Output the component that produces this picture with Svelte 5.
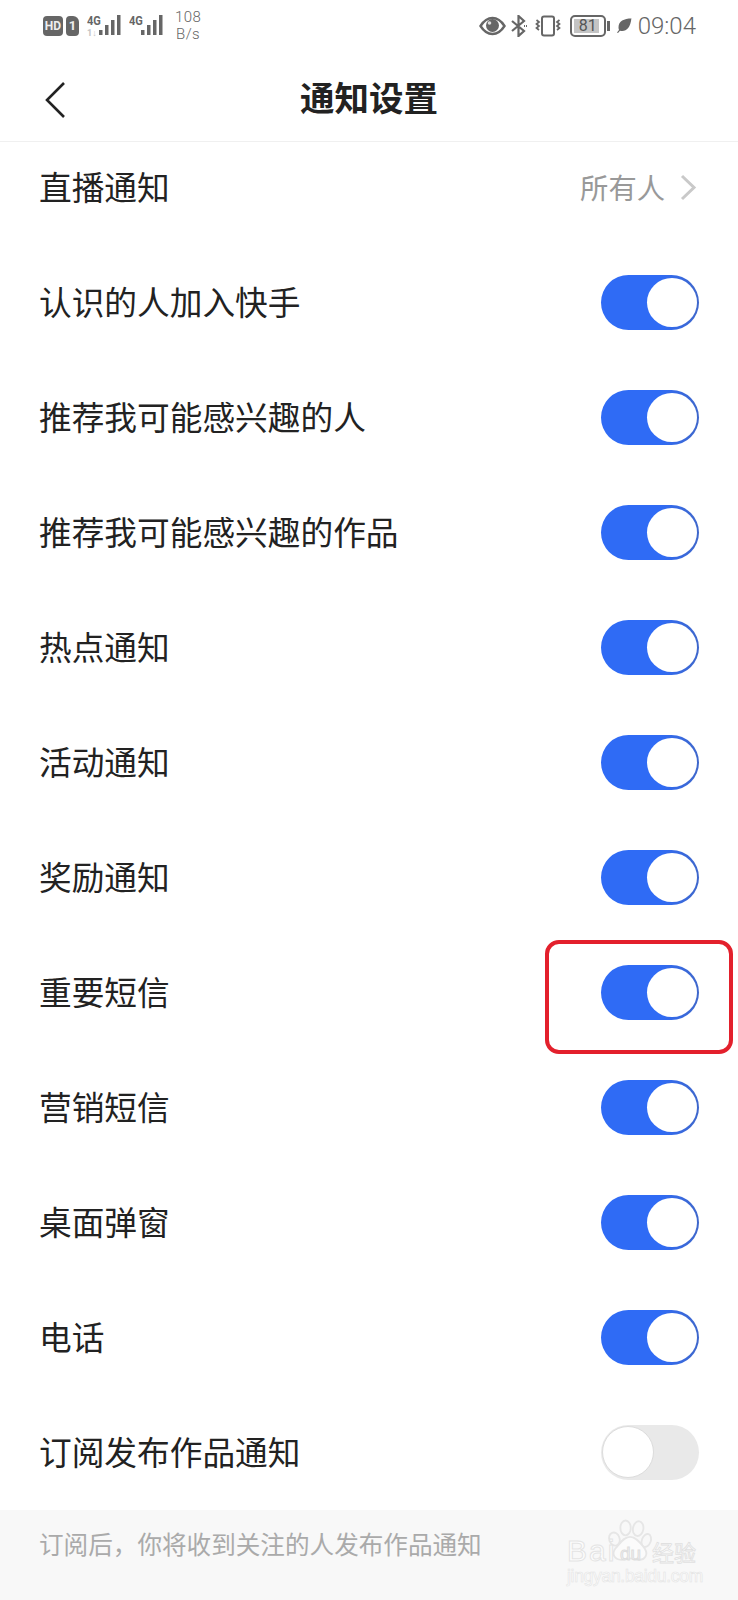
<script>
  const rows = [
    ['认识的人加入快手', true],
    ['推荐我可能感兴趣的人', true],
    ['推荐我可能感兴趣的作品', true],
    ['热点通知', true],
    ['活动通知', true],
    ['奖励通知', true],
    ['重要短信', true],
    ['营销短信', true],
    ['桌面弹窗', true],
    ['电话', true],
    ['订阅发布作品通知', false]
  ];
</script>

<div class="page">
  <div class="status">
    <div class="left">
      <span class="hd">HD</span>
      <span class="one">1</span>
      <div class="sig">
        <span class="g4">4G</span>
        <span class="tiny">1↓</span>
        <svg width="22" height="21" viewBox="0 0 22 21"><g fill="#666"><rect x="0" y="15" width="3.500" height="5"/><rect x="6" y="10" width="3.500" height="10"/><rect x="12" y="5" width="3.500" height="15"/><rect x="18" y="0" width="3.500" height="20"/></g></svg>
      </div>
      <div class="sig">
        <span class="g4">4G</span>
        <svg width="22" height="21" viewBox="0 0 22 21"><g fill="#666"><rect x="0" y="15" width="3.500" height="5"/><rect x="6" y="10" width="3.500" height="10"/><rect x="12" y="5" width="3.500" height="15"/><rect x="18" y="0" width="3.500" height="20"/></g></svg>
      </div>
      <div class="speed"><span>108</span><span>B/s</span></div>
    </div>
    <div class="right">
      <svg class="eye" width="27" height="20" viewBox="0 0 27 20"><path d="M1.500 10C5 4.500 9 2 13.500 2S22 4.500 25.500 10C22 15.500 18 18 13.500 18S5 15.500 1.500 10Z" fill="none" stroke="#666" stroke-width="2.400"/><circle cx="13.500" cy="9.500" r="6.500" fill="#666"/><circle cx="10.500" cy="7" r="1.800" fill="#ddd"/></svg>
      <svg class="bt" width="18" height="22" viewBox="0 0 18 22"><path d="M2 6l12 10-5.500 5V1L14 6 2 16" fill="none" stroke="#666" stroke-width="2.200"/><path d="M14 11h3.500" stroke="#666" stroke-width="2" stroke-dasharray="1 1"/></svg>
      <svg class="vib" width="26" height="22" viewBox="0 0 26 22"><rect x="7" y="1.500" width="12" height="19" rx="2" fill="none" stroke="#666" stroke-width="2"/><path d="M1.500 5l2.500 2-2.500 2 2.500 2-2.500 2 2.500 2M24.500 5l-2.500 2 2.500 2-2.500 2 2.500 2-2.500 2" fill="none" stroke="#666" stroke-width="1.700"/></svg>
      <div class="battery"><span class="level"></span><span class="pct">81</span></div>
      <span class="cap"></span>
      <svg class="leaf" width="15" height="15" viewBox="0 0 15 15"><path d="M14.500 .5C7 .5 1.500 3 1.500 9.500c0 1 .2 1.800.5 2.500L0 14.500l1 .5 2-2.300c5.500 1.500 10.500-2 11.500-13.200Z" fill="#666"/></svg>
      <span class="time">09:04</span>
    </div>
  </div>

  <header class="nav">
    <svg class="back" width="22" height="38" viewBox="0 0 22 38"><path d="M20 2 3 19l17 17" fill="none" stroke="#222" stroke-width="2.600"/></svg>
    <h1>通知设置</h1>
  </header>

  <div class="row first">
    <span class="label">直播通知</span>
    <div class="value">
      <span>所有人</span>
      <svg width="17" height="27" viewBox="0 0 17 27"><path d="M2 2l12 11.500L2 25" fill="none" stroke="#c9c9c9" stroke-width="3"/></svg>
    </div>
  </div>

  {#each rows as [label, on]}
    <div class="row">
      <span class="label">{label}</span>
      <span class="toggle" class:on><span class="knob"></span></span>
    </div>
  {/each}

  <footer class="foot">订阅后，你将收到关注的人发布作品通知</footer>

  <div class="redbox"></div>

  <div class="mark">
    <svg class="paw" width="46" height="46" viewBox="0 0 62 62"><g fill="none" stroke="#e6e6e6" stroke-width="2.500"><ellipse cx="10" cy="27" rx="7" ry="9" transform="rotate(-20 10 27)"/><ellipse cx="25" cy="12" rx="7" ry="10"/><ellipse cx="42" cy="13" rx="7" ry="10" transform="rotate(10 42 13)"/><ellipse cx="53" cy="29" rx="6" ry="9" transform="rotate(20 53 29)"/><path d="M31 24c9 0 15 10 20 16 5 8 0 16-9 15-5-1-8-2-11-2s-7 2-12 2c-9 0-13-8-8-15 6-6 11-16 20-16Z" fill="#fbfbfb"/></g></svg>
    <span class="bai">Bai</span>
    <span class="du">du</span>
    <span class="jy">经验</span>
    <span class="url">jingyan.baidu.com</span>
  </div>
</div>

<style>
  :global(body) {
    margin: 0;
    background: #fff;
  }
  .page {
    position: relative;
    width: 738px;
    height: 1600px;
    overflow: hidden;
    background: #fff;
    color: #222;
    font-family: "Noto Sans CJK SC", "Noto Sans", sans-serif;
  }
  .status {
    height: 54px;
    display: flex;
    justify-content: space-between;
    align-items: flex-start;
    padding: 9px 42px 0 43px;
    box-sizing: border-box;
    color: #666;
    font-family: Roboto, sans-serif;
  }
  .left, .right {
    display: flex;
    align-items: center;
    height: 33px;
  }
  .hd {
    width: 20px;
    height: 20px;
    margin-top: 1px;
    background: #666;
    color: #eee;
    border-radius: 4px;
    font-size: 12px;
    font-weight: 700;
    line-height: 20px;
    text-align: center;
  }
  .one {
    width: 13px;
    height: 20px;
    margin: 1px 0 0 3px;
    background: #666;
    color: #eee;
    border-radius: 4px 6px 4px 4px;
    font-size: 13px;
    font-weight: 700;
    line-height: 20px;
    text-align: center;
  }
  .sig {
    position: relative;
    width: 34px;
    height: 28px;
    margin-left: 8px;
  }
  .sig svg {
    position: absolute;
    right: 0;
    top: 3px;
  }
  .g4 {
    position: absolute;
    left: 0;
    top: 2px;
    font-size: 13px;
    font-weight: 700;
    line-height: 13px;
    letter-spacing: -.2px;
    transform: scaleX(.85);
    transform-origin: left;
  }
  .tiny {
    position: absolute;
    left: 0;
    top: 16px;
    font-size: 9px;
    line-height: 10px;
    color: #c4c4c4;
    font-weight: 700;
  }
  .speed {
    display: flex;
    flex-direction: column;
    align-items: center;
    margin: 0 0 0 12px;
    font-size: 15px;
    line-height: 17px;
    font-weight: 300;
    letter-spacing: .4px;
  }
  .eye { margin-right: 4px; }
  .bt { margin-right: 7px; }
  .vib { margin-right: 9px; }
  .battery {
    position: relative;
    width: 36px;
    height: 22px;
    box-sizing: border-box;
    border: 2px solid #666;
    border-radius: 5px;
    display: flex;
    align-items: center;
    justify-content: center;
  }
  .level {
    position: absolute;
    left: 2px;
    top: 2px;
    bottom: 2px;
    width: 25px;
    background: #c4c4c4;
  }
  .pct {
    position: relative;
    font-size: 16px;
    font-weight: 400;
    line-height: 18px;
    color: #555;
  }
  .cap {
    width: 2.500px;
    height: 10px;
    margin: 0 7px 0 1.500px;
    background: #666;
  }
  .leaf { margin-right: 6px; }
  .time {
    font-size: 24px;
    font-weight: 300;
    line-height: 28px;
    color: #666;
  }
  .nav {
    position: relative;
    height: 88px;
    box-sizing: border-box;
    border-bottom: 1px solid #f0f0f0;
    display: flex;
    align-items: center;
    justify-content: center;
  }
  .back {
    position: absolute;
    left: 44px;
    top: 27px;
  }
  h1 {
    margin: 0 0 4px;
    font-size: 34.500px;
    font-weight: 700;
    line-height: 48px;
    color: #222;
  }
  .row {
    height: 115px;
    box-sizing: border-box;
    padding: 0 39px;
    display: flex;
    align-items: center;
    justify-content: space-between;
  }
  .first {
    height: 103px;
    padding-bottom: 11px;
    padding-right: 41px;
  }
  .label {
    padding-bottom: 4px;
    font-size: 32.700px;
    line-height: 44px;
    color: #222;
  }
  .value {
    display: flex;
    align-items: center;
    gap: 15px;
    padding-bottom: 2px;
    font-size: 28.300px;
    line-height: 40px;
    color: #999;
  }
  .toggle {
    width: 98px;
    height: 55px;
    box-sizing: border-box;
    padding: 3px 2px;
    border-radius: 28px;
    background: #e9e9e9;
    display: flex;
  }
  .toggle.on {
    background: linear-gradient(90deg, #2f6bf5 60%, #3f67cb);
    justify-content: flex-end;
  }
  .toggle:not(.on) {
    padding: 2px 1px;
  }
  .knob {
    width: 50px;
    height: 49px;
    box-sizing: border-box;
    border-radius: 50%;
    background: #fff;
  }
  .toggle:not(.on) .knob {
    width: 52px;
    height: 52px;
    margin-top: -1px;
    border: 1.500px solid #dcdcdc;
  }
  .foot {
    height: 90px;
    box-sizing: border-box;
    padding: 13px 0 0 39px;
    background: #f8f8f8;
    font-size: 24.600px;
    line-height: 40px;
    color: #aaa;
  }
  .redbox {
    position: absolute;
    left: 545px;
    top: 940px;
    width: 188px;
    height: 114px;
    box-sizing: border-box;
    border: 4.500px solid #e3202c;
    border-radius: 14px;
  }
  .mark {
    position: absolute;
    left: 560px;
    top: 1518px;
    width: 170px;
    height: 80px;
    color: #fff;
    font-family: "Liberation Sans", sans-serif;
  }
  .paw {
    position: absolute;
    left: 47px;
    top: 1px;
  }
  .bai {
    position: absolute;
    left: 7px;
    top: 15px;
    font-size: 30px;
    line-height: 36px;
    letter-spacing: 2px;
    color: #fdfdfd;
    -webkit-text-stroke: 1px #e4e4e4;
  }
  .du {
    position: absolute;
    left: 60px;
    top: 26px;
    font-size: 19px;
    line-height: 20px;
    color: #f4f4f4;
    -webkit-text-stroke: 1px #dedede;
  }
  .jy {
    position: absolute;
    left: 92px;
    top: 16px;
    font-family: "Noto Sans CJK SC", sans-serif;
    font-size: 22px;
    line-height: 34px;
    color: #fdfdfd;
    -webkit-text-stroke: .8px #e0e0e0;
  }
  .url {
    position: absolute;
    left: 7px;
    top: 46px;
    font-size: 17.500px;
    line-height: 24px;
    color: #fdfdfd;
    -webkit-text-stroke: .6px #e4e4e4;
    white-space: nowrap;
    letter-spacing: -.3px;
  }
</style>
